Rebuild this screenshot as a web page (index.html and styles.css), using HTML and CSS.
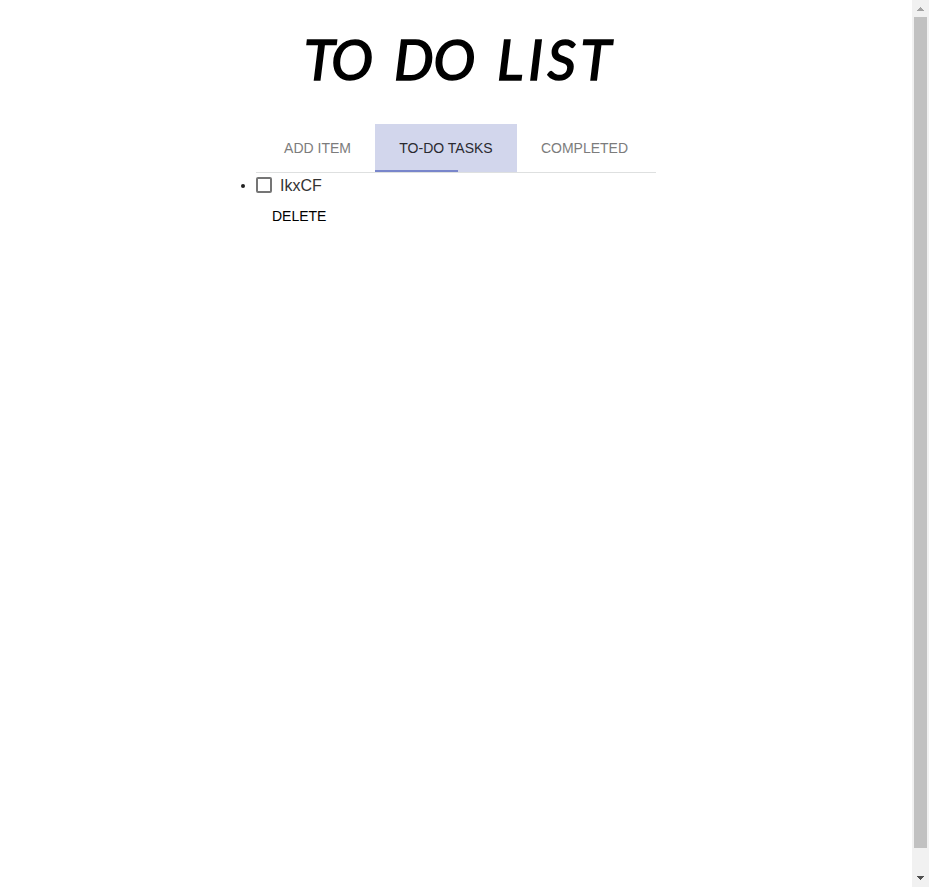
FILE: index.html
```html
<!DOCTYPE html>
<html lang="en">
<head>
<meta charset="utf-8">
<title>To Do List</title>
<link rel="stylesheet" href="styles.css">
</head>
<body>
<main class="app">
  <h1 class="title"><span class="word-to">TO</span> <span class="word-do">DO</span> <span class="word-list">LIST</span></h1>
  <div class="panel">
    <nav class="tabs">
      <button class="tab tab-add">ADD ITEM</button>
      <button class="tab tab-todo active">TO-DO TASKS</button>
      <button class="tab tab-done">COMPLETED</button>
    </nav>
    <ul class="tasks">
      <li class="task">
        <span class="bullet"></span>
        <label class="item"><span class="box"></span><span>IkxCF</span></label>
        <button class="delete">DELETE</button>
      </li>
    </ul>
  </div>
</main>
<aside class="scrollbar">
  <svg class="arrow" width="17" height="17" shape-rendering="crispEdges"><path d="M8 7h1v1h1v1h1v1h1v1H5v-1h1v-1h1v-1h1z" fill="#a3a3a3"/></svg>
  <div class="thumb"></div>
  <svg class="arrow" width="17" height="17" shape-rendering="crispEdges"><path d="M5 6h7v1h-1v1h-1v1H9v1H8V9H7V8H6V7H5z" fill="#505050"/></svg>
</aside>
</body>
</html>
```
FILE: styles.css
```css
* { box-sizing: border-box; }
body {
  margin: 0;
  height: 887px;
  display: flex;
  overflow: hidden;
  background: #fff;
  font-family: "Liberation Sans", Arial, sans-serif;
}
button { border: 0; background: none; font: inherit; padding: 0; }
.app { flex: 1; display: flex; flex-direction: column; align-items: center; }
.title {
  margin: 0;
  height: 124px;
  width: 310px;
  display: grid;
  grid-template-columns: 93px 103px 114px;
  line-height: 117px;
  font-family: Lato, sans-serif;
  font-size: 56px;
  font-style: italic;
  font-weight: 400;
  -webkit-text-stroke: 1.6px #000;
  color: #000;
  white-space: nowrap;
}
.word-to { padding-left: 3px; letter-spacing: -2px; }
.word-list { letter-spacing: 4.5px; }
.panel { width: 400px; }
.tabs {
  height: 49px;
  display: flex;
  justify-content: center;
  border-bottom: 1px solid #dee0e0;
  font-size: 14px;
}
.tab { height: 48px; color: #7c7c7c; line-height: 48px; }
.tab-add { width: 115px; }
.tab-todo { width: 142px; }
.tab-done { width: 135px; }
.tab.active {
  color: #2a2a30;
  background: linear-gradient(#7986cb, #7986cb) 0 46px / 83px 2px no-repeat #d2d6ec;
}
.tasks { margin: 0; padding: 0; list-style: none; }
.task {
  display: grid;
  grid-template-columns: 16px 1fr;
  margin-left: -16px;
}
.bullet { width: 4px; height: 4px; margin: 11px 0 0 1px; border-radius: 50%; background: #212121; }
.item { height: 25px; display: flex; align-items: center; gap: 8px; font-size: 16px; color: #333; }
.box { width: 16px; height: 16px; margin-bottom: 1px; border: 2px solid #757575; border-radius: 2px; }
.delete {
  grid-column: 2;
  justify-self: start;
  height: 36px;
  padding: 0 16px;
  font-size: 14px;
  color: #000;
}
.scrollbar { width: 17px; display: flex; flex-direction: column; background: #f1f1f1; }
.arrow { display: block; flex: none; }
.thumb { height: 831px; margin: 0 2px 22px; background: #c1c1c1; flex: none; }
```
